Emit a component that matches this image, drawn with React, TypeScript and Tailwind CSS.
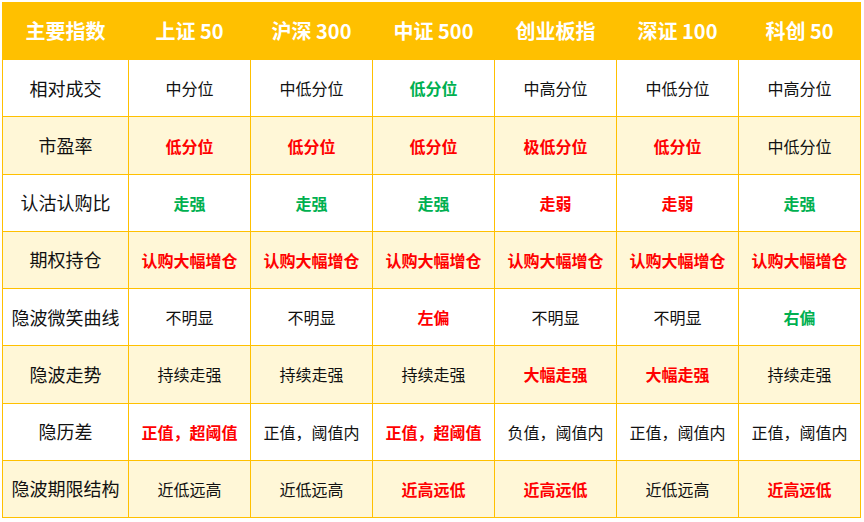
import React from 'react';

type Tone = 'n' | 'r' | 'g';
type Cell = [string, Tone];

const headers = ['主要指数', '上证 50', '沪深 300', '中证 500', '创业板指', '深证 100', '科创 50'];

const rows: { label: string; cells: Cell[] }[] = [
  {
    label: '相对成交',
    cells: [['中分位', 'n'], ['中低分位', 'n'], ['低分位', 'g'], ['中高分位', 'n'], ['中低分位', 'n'], ['中高分位', 'n']],
  },
  {
    label: '市盈率',
    cells: [['低分位', 'r'], ['低分位', 'r'], ['低分位', 'r'], ['极低分位', 'r'], ['低分位', 'r'], ['中低分位', 'n']],
  },
  {
    label: '认沽认购比',
    cells: [['走强', 'g'], ['走强', 'g'], ['走强', 'g'], ['走弱', 'r'], ['走弱', 'r'], ['走强', 'g']],
  },
  {
    label: '期权持仓',
    cells: [
      ['认购大幅增仓', 'r'],
      ['认购大幅增仓', 'r'],
      ['认购大幅增仓', 'r'],
      ['认购大幅增仓', 'r'],
      ['认购大幅增仓', 'r'],
      ['认购大幅增仓', 'r'],
    ],
  },
  {
    label: '隐波微笑曲线',
    cells: [['不明显', 'n'], ['不明显', 'n'], ['左偏', 'r'], ['不明显', 'n'], ['不明显', 'n'], ['右偏', 'g']],
  },
  {
    label: '隐波走势',
    cells: [['持续走强', 'n'], ['持续走强', 'n'], ['持续走强', 'n'], ['大幅走强', 'r'], ['大幅走强', 'r'], ['持续走强', 'n']],
  },
  {
    label: '隐历差',
    cells: [
      ['正值，超阈值', 'r'],
      ['正值，阈值内', 'n'],
      ['正值，超阈值', 'r'],
      ['负值，阈值内', 'n'],
      ['正值，阈值内', 'n'],
      ['正值，阈值内', 'n'],
    ],
  },
  {
    label: '隐波期限结构',
    cells: [['近低远高', 'n'], ['近低远高', 'n'], ['近高远低', 'r'], ['近高远低', 'r'], ['近低远高', 'n'], ['近高远低', 'r']],
  },
];

const toneClass: Record<Tone, string> = {
  n: 'text-[#111111] font-normal',
  r: 'text-[#ff0000] font-bold',
  g: 'text-[#00b050] font-bold',
};

export default function App() {
  return (
    <div className="w-[864px] h-[522px] bg-white p-[2px] font-['Noto_Sans_CJK_SC','Microsoft_YaHei',sans-serif]">
      <div className="w-[859px] h-[516px] grid grid-cols-[125px_repeat(6,minmax(0,1fr))] grid-rows-[repeat(9,minmax(0,1fr))] gap-px bg-[#ffc000] p-px">
        {headers.map((h) => (
          <div key={h} className="bg-[#ffc000] flex items-center justify-center text-white font-bold text-[20px]">
            {h}
          </div>
        ))}
        {rows.map((row, i) => {
          const bg = i % 2 === 1 ? 'bg-[#fff7d7]' : 'bg-white';
          return (
            <React.Fragment key={row.label}>
              <div className={`${bg} flex items-center justify-center text-[18px] text-[#111111]`}>{row.label}</div>
              {row.cells.map(([text, tone], j) => (
                <div key={j} className={`${bg} flex items-center justify-center text-[16px] ${toneClass[tone]}`}>
                  {text}
                </div>
              ))}
            </React.Fragment>
          );
        })}
      </div>
    </div>
  );
}
